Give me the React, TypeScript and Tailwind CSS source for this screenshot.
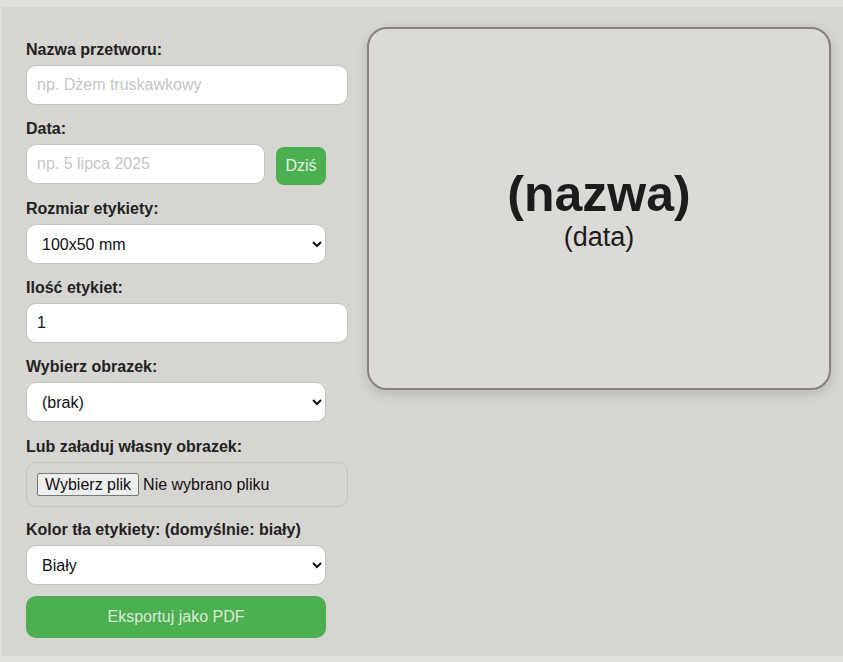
import { useState } from "react";

const labelCls = "block text-[16px] leading-[18px] font-bold text-[#222] mb-[6px]";
const inputCls =
  "block h-[40px] rounded-[10px] border border-[#c4c2bd] bg-white px-[10px] text-[16px] text-[#111] placeholder:text-[#c6c6c6] outline-none";
const selectCls =
  "block h-[40px] w-[300px] rounded-[10px] border border-[#c4c2bd] bg-white pl-[11px] pr-[6px] text-[16px] text-[#111] outline-none";

export default function App() {
  const [name, setName] = useState("");
  const [date, setDate] = useState("");
  const [count, setCount] = useState("1");

  return (
    <div
      className="min-h-[662px] bg-[#e0dfdc] pt-[7px] pb-[6px] pl-[2px]"
      style={{ fontFamily: '"Liberation Sans", Arial, sans-serif' }}
    >
      <div className="flex h-[649px] gap-[19px] bg-[#d6d5d1] pl-[24px] pt-[20px]">
        <form className="mt-[14px] flex w-[322px] flex-col" onSubmit={(e) => e.preventDefault()}>
          <label className={labelCls}>Nazwa przetworu:</label>
          <input
            className={`${inputCls} mb-[15px] w-[322px]`}
            placeholder="np. Dżem truskawkowy"
            value={name}
            onChange={(e) => setName(e.target.value)}
          />

          <label className={labelCls}>Data:</label>
          <div className="mb-[15px] flex items-start gap-[11px]">
            <input
              className={`${inputCls} w-[239px]`}
              placeholder="np. 5 lipca 2025"
              value={date}
              onChange={(e) => setDate(e.target.value)}
            />
            <button
              type="button"
              className="mt-[3px] h-[38px] w-[50px] rounded-[8px] bg-[#4caf50] text-[16px] text-[#e6f2e4]"
              onClick={() => setDate("5 lipca 2025")}
            >
              Dziś
            </button>
          </div>

          <label className={labelCls}>Rozmiar etykiety:</label>
          <select className={`${selectCls} mb-[15px]`} defaultValue="100x50">
            <option value="100x50">100x50 mm</option>
            <option value="70x40">70x40 mm</option>
            <option value="50x30">50x30 mm</option>
          </select>

          <label className={labelCls}>Ilość etykiet:</label>
          <input
            className={`${inputCls} mb-[15px] w-[322px]`}
            value={count}
            onChange={(e) => setCount(e.target.value)}
          />

          <label className={labelCls}>Wybierz obrazek:</label>
          <select className={`${selectCls} mb-[16px]`} defaultValue="brak">
            <option value="brak">(brak)</option>
            <option value="truskawka">Truskawka</option>
            <option value="wisnia">Wiśnia</option>
          </select>

          <label className={labelCls}>Lub załaduj własny obrazek:</label>
          <div className="mb-[14px] flex h-[45px] w-[322px] items-center rounded-[10px] border border-[#c4c2bd] pl-[10px]">
            <span className="flex h-[23px] items-center rounded-[2px] border border-[#767676] bg-[#efefef] px-[7px] text-[16px] text-[#111]">
              Wybierz plik
            </span>
            <span className="ml-[4px] text-[16px] text-[#111]">Nie wybrano pliku</span>
          </div>

          <label className={labelCls}>Kolor tła etykiety: (domyślnie: biały)</label>
          <select className={`${selectCls} mb-[11px]`} defaultValue="bialy">
            <option value="bialy">Biały</option>
            <option value="kremowy">Kremowy</option>
            <option value="zolty">Żółty</option>
          </select>

          <button
            type="submit"
            className="h-[42px] w-[300px] rounded-[10px] bg-[#4caf50] text-[16px] text-[#dbe9d8]"
          >
            Eksportuj jako PDF
          </button>
        </form>

        <div className="flex h-[363px] w-[464px] flex-col items-center justify-center rounded-[20px] border-2 border-[#87837a] bg-[#dbdad6] shadow-[0_4px_12px_rgba(0,0,0,0.15)]">
          <div className="text-[50px] font-bold leading-[56px] text-[#1c1c1c]">(nazwa)</div>
          <div className="text-[27px] leading-[30px] text-[#1c1c1c]">(data)</div>
        </div>
      </div>
    </div>
  );
}
